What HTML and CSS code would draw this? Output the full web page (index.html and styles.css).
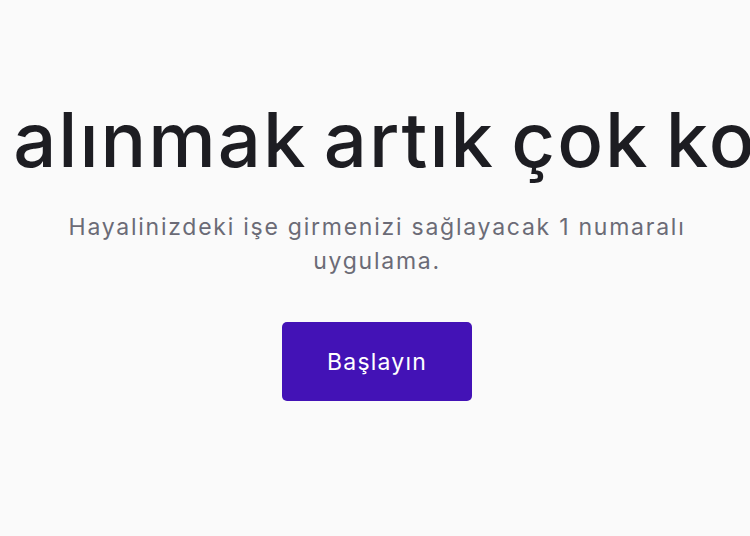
FILE: index.html
```html
<!DOCTYPE html>
<html lang="tr">
<head>
<meta charset="utf-8">
<title>Başlayın</title>
<link rel="stylesheet" href="styles.css">
</head>
<body>
<main class="hero">
  <h1 class="hero-title">İşe alınmak artık çok kolay</h1>
  <p class="hero-text">Hayalinizdeki işe girmenizi sağlayacak 1 numaralı uygulama.</p>
  <a class="hero-button" href="#">Başlayın</a>
</main>
</body>
</html>
```

FILE: styles.css
```css
html, body {
  margin: 0;
  padding: 0;
  background: #fafafa;
  overflow: hidden;
}

body {
  font-family: Inter, "Noto Sans", sans-serif;
  width: 750px;
  height: 536px;
}

.hero {
  display: flex;
  flex-direction: column;
  align-items: center;
  padding: 96px 0 0 4px;
  overflow: hidden;
  height: 100%;
  box-sizing: border-box;
}

.hero-title {
  margin: 0;
  padding-right: 2px;
  font-size: 76px;
  line-height: 86px;
  font-weight: 500;
  letter-spacing: 2px;
  word-spacing: -6px;
  color: #1d1d22;
  white-space: nowrap;
  flex-shrink: 0;
}

.hero-text {
  margin: 28px 0 0;
  width: 660px;
  text-align: center;
  font-size: 23px;
  line-height: 34px;
  font-weight: 400;
  letter-spacing: 1.75px;
  color: #6b6b76;
}

.hero-button {
  margin-top: 44px;
  width: 190px;
  height: 79px;
  display: flex;
  align-items: center;
  justify-content: center;
  background: #4312b6;
  color: #ffffff;
  border-radius: 5px;
  text-decoration: none;
  font-size: 23px;
  font-weight: 400;
  letter-spacing: 1.2px;
}
```
